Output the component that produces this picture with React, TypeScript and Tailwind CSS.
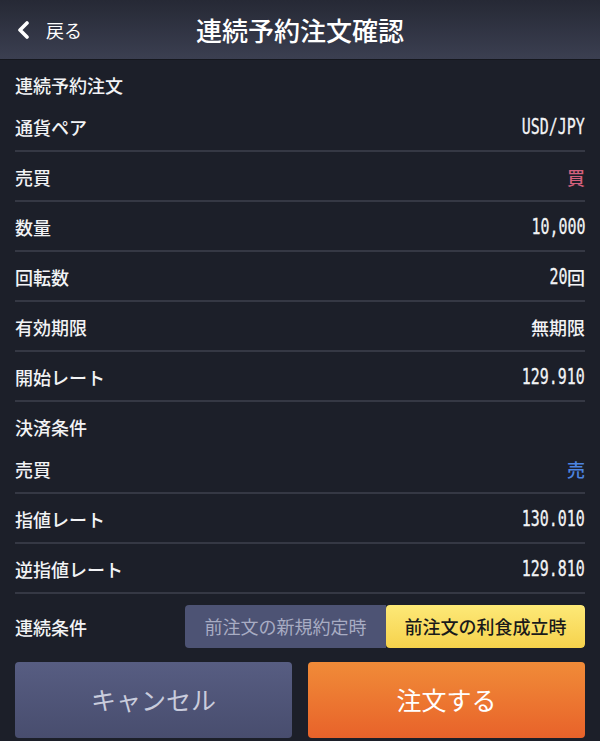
import type { ReactNode } from "react";

const jp = "font-['Noto_Sans_CJK_JP','Noto_Sans',sans-serif]";

function Num({ children }: { children: ReactNode }) {
  return (
    <span className="inline-block origin-right scale-x-[0.68] font-['DejaVu_Sans_Mono',monospace] text-[22px] leading-none text-[#f2f3f5] [-webkit-text-stroke:0.3px_#f2f3f5]">
      {children}
    </span>
  );
}

function SectionTitle({ children }: { children: ReactNode }) {
  return (
    <div className="flex h-[42px] items-end pb-[6px] text-[18px] font-medium leading-[22px] text-[#f2f3f5]">
      {children}
    </div>
  );
}

function Row({ label, children }: { label: string; children: ReactNode }) {
  return (
    <div className="flex h-[50px] items-center justify-between border-b-2 border-[#353844] pt-[2px]">
      <span className="text-[18px] font-medium leading-[22px] text-[#f2f3f5]">{label}</span>
      <span className="flex items-center font-medium">{children}</span>
    </div>
  );
}

export default function App() {
  return (
    <div className={`min-h-screen w-full bg-[#1c1f29] ${jp}`}>
      {/* Header */}
      <header className="relative flex h-[60px] items-center border-b border-[#15171e] bg-gradient-to-b from-[#262935] to-[#3b3f51] px-[16px]">
        <button className="flex items-center gap-[16px] text-white">
          <svg width="14" height="18" viewBox="0 0 14 18" fill="none">
            <path d="M11 2 L4 9 L11 16" stroke="white" strokeWidth="3.6" strokeLinecap="round" strokeLinejoin="round" />
          </svg>
          <span className="text-[18px] leading-none">戻る</span>
        </button>
        <h1 className="absolute left-1/2 -translate-x-1/2 text-[26px] font-medium leading-none text-white">
          連続予約注文確認
        </h1>
      </header>

      <main className="px-[15px] pb-[4px]">
        <SectionTitle>連続予約注文</SectionTitle>
        <Row label="通貨ペア">
          <Num>USD/JPY</Num>
        </Row>
        <Row label="売買">
          <span className="text-[18px] leading-none text-[#d4617d]">買</span>
        </Row>
        <Row label="数量">
          <Num>10,000</Num>
        </Row>
        <Row label="回転数">
          <Num>20</Num>
          <span className="text-[18px] leading-none text-[#f2f3f5]">回</span>
        </Row>
        <Row label="有効期限">
          <span className="text-[18px] leading-none text-[#f2f3f5]">無期限</span>
        </Row>
        <Row label="開始レート">
          <Num>129.910</Num>
        </Row>

        <SectionTitle>決済条件</SectionTitle>
        <Row label="売買">
          <span className="text-[18px] leading-none text-[#4c84e0]">売</span>
        </Row>
        <Row label="指値レート">
          <Num>130.010</Num>
        </Row>
        <Row label="逆指値レート">
          <Num>129.810</Num>
        </Row>

        {/* 連続条件 */}
        <div className="flex items-center justify-between pt-[11px]">
          <span className="text-[18px] font-medium leading-[22px] text-[#f2f3f5]">連続条件</span>
          <div className="grid h-[43px] w-[400px] grid-cols-[201px_199px] overflow-hidden rounded-[4px]">
            <div className="flex items-center justify-center bg-[#4d5374] text-[18px] text-[#a8acc3]">
              前注文の新規約定時
            </div>
            <div className="flex items-center justify-center rounded-[4px] bg-gradient-to-b from-[#fde977] to-[#f6d24b] text-[18px] font-medium text-[#1a1a1a]">
              前注文の利食成立時
            </div>
          </div>
        </div>

        {/* Buttons */}
        <div className="mt-[14px] grid grid-cols-2 gap-[16px]">
          <button className="flex h-[76px] items-center justify-center rounded-[4px] bg-gradient-to-b from-[#575d82] to-[#484d6e] text-[25px] text-[#c9ccdc]">
            キャンセル
          </button>
          <button className="flex h-[76px] items-center justify-center rounded-[4px] bg-gradient-to-b from-[#f08b38] to-[#e8622a] text-[25px] text-white">
            注文する
          </button>
        </div>
      </main>
    </div>
  );
}
